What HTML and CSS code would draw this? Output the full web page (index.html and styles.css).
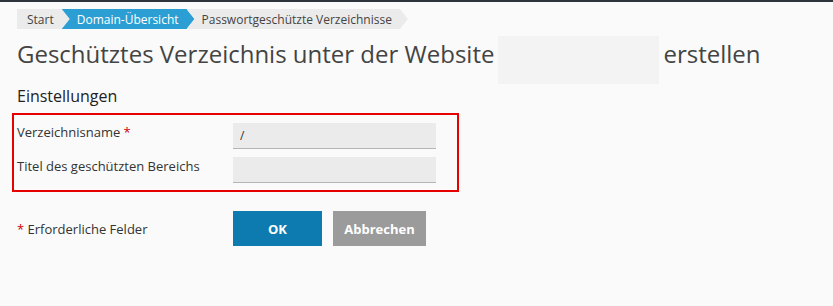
FILE: index.html
```html
<!DOCTYPE html>
<html lang="de">
<head>
  <meta charset="UTF-8">
  <title>Geschütztes Verzeichnis erstellen</title>
  <link rel="stylesheet" href="styles.css">
</head>
<body>
  <div class="topbar"></div>

  <div class="page">
    <ul class="crumbs">
      <li class="crumb">Start</li>
      <li class="crumb crumb-active">Domain-Übersicht</li>
      <li class="crumb">Passwortgeschützte Verzeichnisse</li>
    </ul>

    <h1 class="title">Geschütztes Verzeichnis unter der Website<span class="masked"></span>erstellen</h1>

    <h2 class="section">Einstellungen</h2>

    <div class="fields">
      <div class="row">
        <label class="label">Verzeichnisname <span class="req">*</span></label>
        <input class="field" type="text" value="/">
      </div>
      <div class="row">
        <label class="label">Titel des geschützten Bereichs</label>
        <input class="field" type="text">
      </div>
    </div>

    <div class="actions">
      <div class="label"><span class="req">*</span> Erforderliche Felder</div>
      <button class="btn btn-ok">OK</button>
      <button class="btn btn-cancel">Abbrechen</button>
    </div>
  </div>
</body>
</html>
```

FILE: styles.css
```css
body {
  margin: 0;
  background: #fafafa;
  font-family: "Open Sans", Arial, sans-serif;
  color: #333;
}
.topbar {
  height: 2px;
  background: #2e343b;
}
.page {
  padding: 7px 17px 20px;
}
.crumbs {
  display: flex;
  list-style: none;
  margin: 0;
  padding: 0;
  height: 20px;
}
.crumb {
  display: flex;
  align-items: center;
  height: 20px;
  padding: 0 16px 0 15px;
  margin-left: -8px;
  font-size: 12px;
  color: #444;
  background: #ebebeb;
  clip-path: polygon(0 0, calc(100% - 8px) 0, 100% 50%, calc(100% - 8px) 100%, 0 100%, 8px 50%);
}
.crumb:first-child {
  padding-left: 10px;
  margin-left: 0;
  clip-path: polygon(0 0, calc(100% - 8px) 0, 100% 50%, calc(100% - 8px) 100%, 0 100%);
}
.crumb-active {
  background: #2b9fd4;
  color: #fff;
}
.title {
  display: flex;
  align-items: flex-start;
  margin: 7px 0 0;
  font-size: 24px;
  line-height: 36px;
  font-weight: normal;
  color: #444;
}
.masked {
  width: 161px;
  height: 48px;
  margin: 0 4px;
  background: #f3f3f3;
}
.section {
  margin: 1px 0 0;
  font-size: 16px;
  font-weight: normal;
  color: #222;
}
.fields {
  margin: 6px 0 0 -5px;
  width: 440px;
  padding: 8px 0 7px 3px;
  border: 2px solid #e60000;
}
.row {
  display: flex;
  align-items: flex-start;
  margin-bottom: 8px;
}
.row:last-child {
  margin-bottom: 0;
}
.label {
  width: 216px;
  padding-top: 1px;
  font-size: 13px;
  line-height: 17px;
  color: #333;
}
.req {
  color: #c00;
}
.field {
  box-sizing: border-box;
  width: 203px;
  height: 26px;
  padding: 0 7px;
  border: none;
  border-bottom: 1px solid #b5b5b5;
  background: #ebebeb;
  font-family: inherit;
  font-size: 12px;
  color: #333;
}
.actions {
  display: flex;
  align-items: center;
  margin-top: 19px;
}
.actions .label {
  padding-top: 1px;
}
.btn {
  height: 35px;
  border: none;
  font-family: inherit;
  font-size: 13px;
  font-weight: bold;
  color: #fff;
}
.btn-ok {
  width: 89px;
  background: #0e7bb0;
}
.btn-cancel {
  width: 93px;
  margin-left: 11px;
  background: #9b9b9b;
}
```
